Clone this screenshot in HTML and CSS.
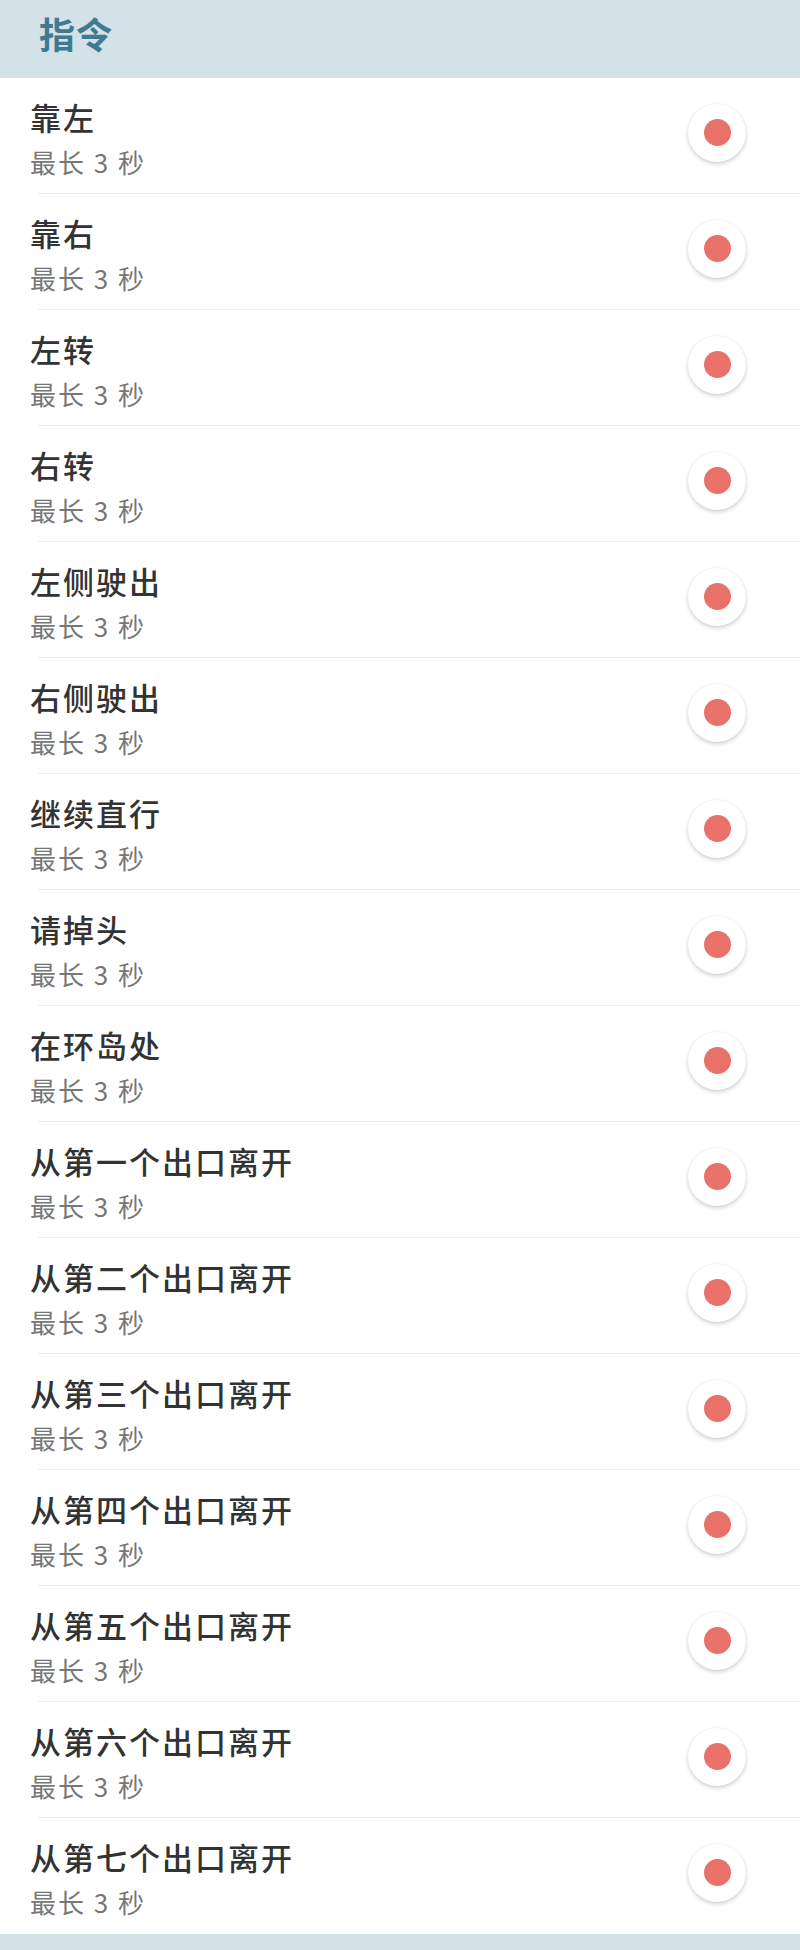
FILE: index.html
```html
<!DOCTYPE html>
<html lang="zh-CN">
<head>
    <meta charset="UTF-8">
    <meta name="viewport" content="width=device-width, initial-scale=1.0">
    <title>指令</title>
    <link rel="stylesheet" href="styles.css">
</head>
<body>
    <div class="header">
        <h1>指令</h1>
    </div>

    <ul class="command-list" id="commandList"></ul>

    <div class="footer"></div>

    <script>
        const commands = [
            "靠左", "靠右", "左转", "右转", "左侧驶出", "右侧驶出", "继续直行",
            "请掉头", "在环岛处",
            "从第一个出口离开", "从第二个出口离开", "从第三个出口离开",
            "从第四个出口离开", "从第五个出口离开", "从第六个出口离开",
            "从第七个出口离开"
        ];

        const list = document.getElementById('commandList');

        commands.forEach(name => {
            const li = document.createElement('li');
            li.className = 'command';
            li.innerHTML = `
                <div class="command-text">
                    <div class="command-name">${name}</div>
                    <div class="command-limit">最长 3 秒</div>
                </div>
                <button class="record-btn"><span class="record-dot"></span></button>
            `;
            list.appendChild(li);
        });
    </script>
</body>
</html>
```

FILE: styles.css
```css
body {
    margin: 0;
    background-color: #fff;
    font-family: "Noto Sans CJK SC", "Noto Sans", sans-serif;
}

.header {
    background-color: #d3e1e8;
    height: 78px;
    padding-left: 39px;
    box-sizing: border-box;
}

.header h1 {
    margin: 0;
    font-size: 36px;
    line-height: 66px;
    font-weight: bold;
    color: #3f7a8f;
    letter-spacing: 1px;
}

.command-list {
    list-style: none;
    margin: 0;
    padding: 0;
}

.command {
    display: flex;
    align-items: center;
    justify-content: space-between;
    height: 116px;
    box-sizing: border-box;
    padding: 0 54px 1px 30px;
    background: linear-gradient(#ececec, #ececec) no-repeat 38px 100% / calc(100% - 38px) 1px;
}

.command:last-child {
    background: none;
}

.command-text {
    margin-top: 8px;
}

.command-name {
    font-size: 31px;
    line-height: 44px;
    color: #333;
    font-weight: 500;
    letter-spacing: 2px;
}

.command-limit {
    font-size: 26px;
    line-height: 46px;
    color: #777;
    letter-spacing: 2px;
}

.record-btn {
    width: 58px;
    height: 58px;
    border-radius: 50%;
    border: none;
    background-color: #fff;
    box-shadow: 0 2px 4px rgba(0, 0, 0, 0.18), 0 0 2px rgba(0, 0, 0, 0.06);
    display: flex;
    align-items: center;
    justify-content: center;
    padding: 0;
    margin-top: -6px;
    cursor: pointer;
}

.record-dot {
    width: 27px;
    height: 27px;
    border-radius: 50%;
    background-color: #ea7169;
}

.footer {
    background-color: #d3e1e8;
    height: 16px;
}
```
